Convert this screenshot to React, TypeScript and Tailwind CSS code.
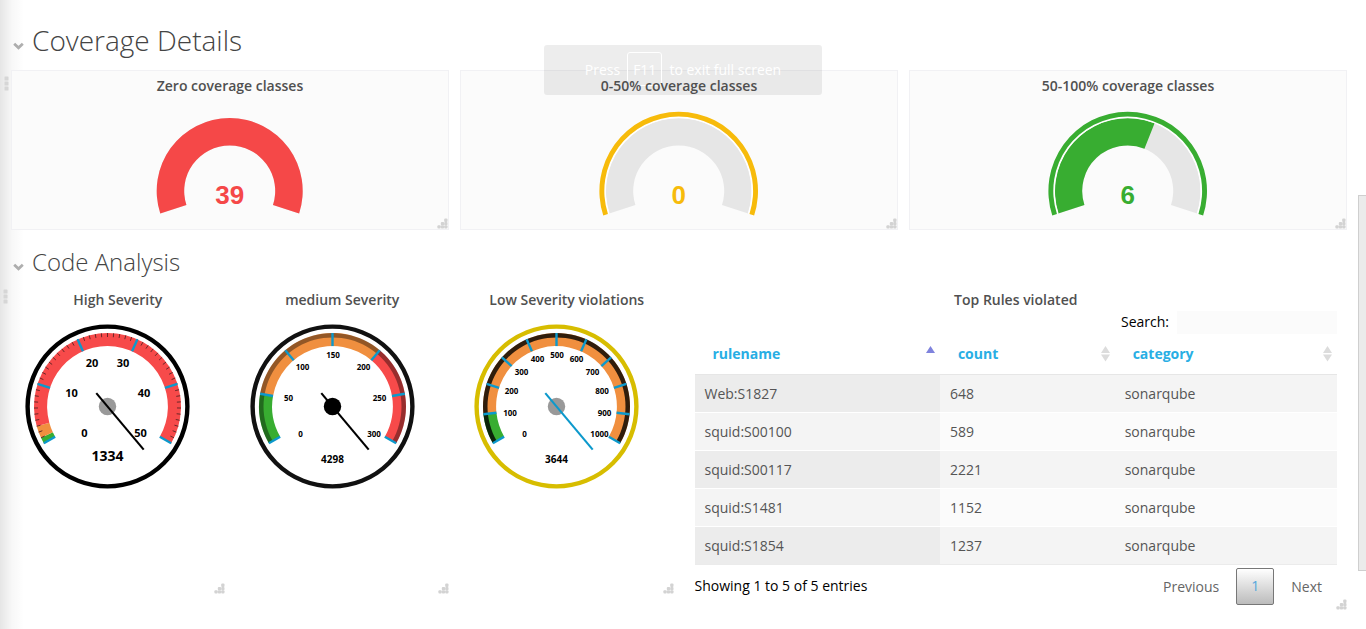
import React from "react";

type Pt = [number, number];

function polar(c: number, r: number, deg: number): Pt {
  const a = (deg * Math.PI) / 180;
  return [c + r * Math.cos(a), c + r * Math.sin(a)];
}

function ring(c: number, ro: number, ri: number, a0: number, a1: number): string {
  const large = a1 - a0 > 180 ? 1 : 0;
  const [x0, y0] = polar(c, ro, a0);
  const [x1, y1] = polar(c, ro, a1);
  const [x2, y2] = polar(c, ri, a1);
  const [x3, y3] = polar(c, ri, a0);
  return `M${x0} ${y0}A${ro} ${ro} 0 ${large} 1 ${x1} ${y1}L${x2} ${y2}A${ri} ${ri} 0 ${large} 0 ${x3} ${y3}Z`;
}

function ResizeGrip() {
  const dots: Pt[] = [[8.8, 2.2], [5.4, 5.5], [8.8, 5.5], [2, 8.8], [5.4, 8.8], [8.8, 8.8]];
  return (
    <svg className="absolute right-0 bottom-0" width="11" height="11" viewBox="0 0 11 11" aria-hidden="true">
      {dots.map(([x, y]) => (
        <rect key={`${x}-${y}`} x={x - 1.6} y={y - 1.6} width="3.3" height="3.3" rx="1" fill="#d3d3d3" />
      ))}
    </svg>
  );
}

function DragGrip() {
  return (
    <svg className="absolute top-[5px] -left-[8px]" width="5" height="15" viewBox="0 0 5 15" aria-hidden="true">
      {[0, 5, 10].map((y) => (
        <rect key={y} x="0.5" y={y + 0.5} width="4" height="4" rx="0.6" fill="#d6d6d6" />
      ))}
    </svg>
  );
}

function Chevron() {
  return (
    <svg className="shrink-0" width="11" height="8" viewBox="0 0 11 8" aria-hidden="true">
      <path d="M1.2 1.8 5.5 5.8 9.8 1.8" fill="none" stroke="#b0b0b0" strokeWidth="2.8" />
    </svg>
  );
}

interface CoverageProps {
  title: string;
  value: number;
  color: string;
  fraction: number;
  outline?: boolean;
  first?: boolean;
}

function CoverageCard({ title, value, color, fraction, outline, first }: CoverageProps) {
  const split = 162 + 216 * fraction;
  return (
    <section className="relative col-span-2 flex h-40 flex-col items-center border border-[#f1f1f4] bg-[#fbfbfb]">
      {first && <DragGrip />}
      <h3 className="relative z-10 mt-[5px] text-[14px] leading-5 font-semibold text-[#505050]">{title}</h3>
      <svg className="mt-[15px]" width="160" height="108" viewBox="0.3 0 160 108" role="img" aria-label={`${title}: ${value}`}>
        <path d={ring(80, 73, 45.5, 162, 378)} fill="#e6e6e6" />
        {fraction > 0 && <path d={ring(80, 73, 45.5, 162, split)} fill={color} />}
        {outline && <path d={ring(80, 74.4, 72.7, 162, 378)} fill="#ffffff" />}
        {outline && <path d={ring(80, 79.3, 74.4, 162, 378)} fill={color} />}
        <text x="80" y="93" textAnchor="middle" fill={color} className="font-['Liberation_Sans',Arial,sans-serif] text-[26px] font-bold">
          {value}
        </text>
      </svg>
      <ResizeGrip />
    </section>
  );
}

interface DialProps {
  title: string;
  value: string;
  valueClass: string;
  valueY: number;
  max: number;
  step: number;
  labelClass: string;
  labels: Pt[];
  bands: { to: number; color: string }[];
  rim: string;
  needle: string;
  hub: string;
  hubOnTop?: boolean;
  shade?: number;
  minor?: number;
  first?: boolean;
}

function DialCard(p: DialProps) {
  const c = 83;
  const angle = (v: number) => 150 + (240 * v) / p.max;
  const majors = Array.from({ length: p.max / p.step + 1 }, (_, i) => i * p.step);
  const minors = p.minor ? Array.from({ length: p.max / p.minor + 1 }, (_, i) => i * p.minor!) : [];
  const tick = (v: number, r0: number, r1: number, stroke: string, w: number) => {
    const [x1, y1] = polar(c, r0, angle(v));
    const [x2, y2] = polar(c, r1, angle(v));
    return <line key={`${v}-${r0}`} x1={x1} y1={y1} x2={x2} y2={y2} stroke={stroke} strokeWidth={w} />;
  };
  const hub = <circle cx={c} cy={c} r="8.7" fill={p.hub} />;
  return (
    <section className="relative col-span-1 flex flex-col">
      {p.first && <DragGrip />}
      <h3 className="mt-[6px] text-center text-[14px] leading-5 font-semibold text-[#505050]">{p.title}</h3>
      <svg className="mt-[13px] ml-[14px]" width="166" height="166" viewBox="0.5 -0.5 166 166" role="img" aria-label={`${p.title}: ${p.value}`}>
        <circle cx={c} cy={c} r="79.9" fill="#ffffff" stroke={p.rim} strokeWidth="4.4" />
        {p.bands.map((b, i) => (
          <path key={b.to} d={ring(c, 73.5, 60.4, angle(i ? p.bands[i - 1].to : 0), angle(b.to))} fill={b.color} />
        ))}
        {p.shade && <path d={ring(c, 73.5, 69, 150, 390)} fill="#000000" fillOpacity={p.shade} />}
        {minors.map((v) => tick(v, 69.5, 73.5, "#5a2323", 0.9))}
        {majors.map((v) => tick(v, 60.4, 73.5, "#0c99cc", 2.4))}
        {majors.map((v, i) => (
          <text key={v} x={c + p.labels[i][0]} y={c + p.labels[i][1]} textAnchor="middle" dominantBaseline="central" fill="#000000" className={p.labelClass}>
            {v}
          </text>
        ))}
        {!p.hubOnTop && hub}
        <line x1={c - 11.2} y1={c - 13.4} x2={c + 36.2} y2={c + 43.2} stroke={p.needle} strokeWidth="2.1" />
        {p.hubOnTop && hub}
        <text x={c} y={p.valueY} textAnchor="middle" dominantBaseline="central" fill="#000000" className={p.valueClass}>
          {p.value}
        </text>
      </svg>
      <ResizeGrip />
    </section>
  );
}

const rules = [
  ["Web:S1827", 648, "sonarqube"],
  ["squid:S00100", 589, "sonarqube"],
  ["squid:S00117", 2221, "sonarqube"],
  ["squid:S1481", 1152, "sonarqube"],
  ["squid:S1854", 1237, "sonarqube"],
];

function SortIcon({ active }: { active?: boolean }) {
  return (
    <svg className="shrink-0" width="9" height="16" viewBox="0 0 9 16" aria-hidden="true">
      <path d="M0 7 4.5 0 9 7Z" fill={active ? "#7f83dd" : "#dcdcdc"} />
      {!active && <path d="M0 8.5 4.5 15.5 9 8.5Z" fill="#dcdcdc" />}
    </svg>
  );
}

function RulesCard() {
  return (
    <section className="relative col-span-3 px-[10px] pb-[5px]">
      <h3 className="mt-[6px] text-center text-[14px] leading-5 font-semibold text-[#505050]">Top Rules violated</h3>
      <div className="flex items-center justify-end gap-2">
        <label htmlFor="rule-search" className="text-[14px] leading-6 text-black">Search:</label>
        <input id="rule-search" type="search" className="h-[23px] w-40 bg-[#fbfbfb] px-2 text-[14px] outline-none" />
      </div>
      <table className="w-full table-fixed border-collapse text-left text-[14px] leading-5 text-[#555555]">
        <colgroup>
          <col className="w-[38.2%]" />
          <col className="w-[27.2%]" />
          <col />
        </colgroup>
        <thead>
          <tr className="h-10 border-b border-[#e6e6e6]">
            {["rulename", "count", "category"].map((h, i) => (
              <th key={h} className="pr-[5px] pl-[18px] font-bold text-[#28aee4]">
                <button type="button" className="flex w-full items-center justify-between">
                  {h}
                  <SortIcon active={i === 0} />
                </button>
              </th>
            ))}
          </tr>
        </thead>
        <tbody>
          {rules.map((r, i) => (
            <tr key={r[0]} className={`h-[38px] border-b border-white last:border-[#ebebeb] ${i % 2 ? "bg-[#fbfbfb]" : "bg-[#f4f4f4]"}`}>
              <td className={`px-[10px] pt-[2px] ${i % 2 ? "bg-[#f4f4f4]" : "bg-[#ececec]"}`}>{r[0]}</td>
              <td className="px-[10px] pt-[2px]">{r[1]}</td>
              <td className="px-[10px] pt-[2px]">{r[2]}</td>
            </tr>
          ))}
        </tbody>
      </table>
      <div className="flex items-center justify-between pt-[3px]">
        <p className="text-[14px] leading-5 text-black">Showing 1 to 5 of 5 entries</p>
        <nav className="flex items-center gap-[2px] text-[14px] leading-5 text-[#666666]" aria-label="Pages">
          <button type="button" className="px-[15px] pt-[9px] pb-[7px]">Previous</button>
          <button type="button" className="h-[37px] w-[38px] rounded-[2px] border border-[#777777] bg-linear-to-b from-white to-[#bcbcbc] text-[#55a7dc]">1</button>
          <button type="button" className="px-[15px] pt-[9px] pb-[7px]">Next</button>
        </nav>
      </div>
      <ResizeGrip />
    </section>
  );
}

const smallLabel = "text-[8px] font-bold";

export default function App() {
  return (
    <main className="relative min-h-screen overflow-hidden bg-white pr-[19px] pb-4 pl-[11px] font-['Open_Sans','Noto_Sans',sans-serif]">
      <div className="pointer-events-none absolute inset-y-0 left-0 w-6 bg-linear-to-r from-black/10 via-black/3 to-transparent" />

      <header className="flex h-[70px] items-center gap-2 pt-[10px] pl-[2px]">
        <span className="pt-[12px]"><Chevron /></span>
        <h1 className="text-[28px] leading-10 font-light text-[#444444]">Coverage Details</h1>
      </header>
      <div className="grid grid-cols-6 gap-[11px]">
        <CoverageCard title="Zero coverage classes" value={39} color="#f54848" fraction={1} first />
        <CoverageCard title="0-50% coverage classes" value={0} color="#f7bb0b" fraction={0} outline />
        <CoverageCard title="50-100% coverage classes" value={6} color="#38ad31" fraction={0.6} outline />
      </div>

      <header className="flex h-[54px] items-center gap-2 pt-[10px] pl-[2px]">
        <span className="pt-[9px]"><Chevron /></span>
        <h2 className="text-[24px] leading-8 font-light text-[#444444]">Code Analysis</h2>
      </header>
      <div className="grid grid-cols-6 gap-[11px]">
        <div className="col-span-3 grid h-[310px] grid-cols-3 gap-[11px]">
          <DialCard
            title="High Severity"
            value="1334"
            valueClass="text-[14px] font-bold"
            valueY={132}
            max={50}
            step={10}
            minor={1}
            labelClass="text-[11px] font-bold"
            labels={[[-23, 26], [-36, -14], [-15.5, -44], [15.5, -44], [36.5, -14], [33, 26]]}
            bands={[{ to: 1, color: "#38ad31" }, { to: 3, color: "#f08f3f" }, { to: 50, color: "#f74a4a" }]}
            rim="#000000"
            needle="#000000"
            hub="#999999"
            first
          />
          <DialCard
            title="medium Severity"
            value="4298"
            valueClass="text-[10px] font-bold"
            valueY={135.5}
            max={300}
            step={50}
            labelClass={smallLabel}
            labels={[[-32, 27], [-44, -9], [-30, -40], [0.5, -52], [31, -40], [47, -9], [41.5, 27]]}
            bands={[{ to: 50, color: "#38ad31" }, { to: 200, color: "#f08f3f" }, { to: 300, color: "#f74a4a" }]}
            shade={0.39}
            rim="#111111"
            needle="#000000"
            hub="#000000"
            hubOnTop
          />
          <DialCard
            title="Low Severity violations"
            value="3644"
            valueClass="text-[10px] font-bold"
            valueY={135.5}
            max={1000}
            step={100}
            labelClass={smallLabel}
            labels={[[-32, 27], [-46.5, 6], [-45, -16], [-35, -35], [-19, -48], [0.5, -52], [20, -48], [36, -35], [45.5, -16], [48, 6], [43, 27]]}
            bands={[{ to: 100, color: "#38ad31" }, { to: 1000, color: "#f08f3f" }]}
            shade={0.8}
            rim="#d7bd00"
            needle="#0c99cc"
            hub="#999999"
          />
        </div>
        <RulesCard />
      </div>

      <div role="status" className="absolute top-[45px] left-1/2 flex h-[50px] w-[278px] -translate-x-1/2 items-center justify-center gap-[7px] rounded-[3px] bg-black/7 pb-[2px] text-[14px] text-white">
        Press
        <kbd className="flex h-[34px] items-center rounded-[3px] border border-white px-[5px] font-['Open_Sans',sans-serif]">F11</kbd>
        to exit full screen
      </div>
      <div className="absolute top-[195px] right-0 h-[376px] w-2 border border-r-0 border-[#cfcfcf] bg-[#ebebeb]" />
    </main>
  );
}
